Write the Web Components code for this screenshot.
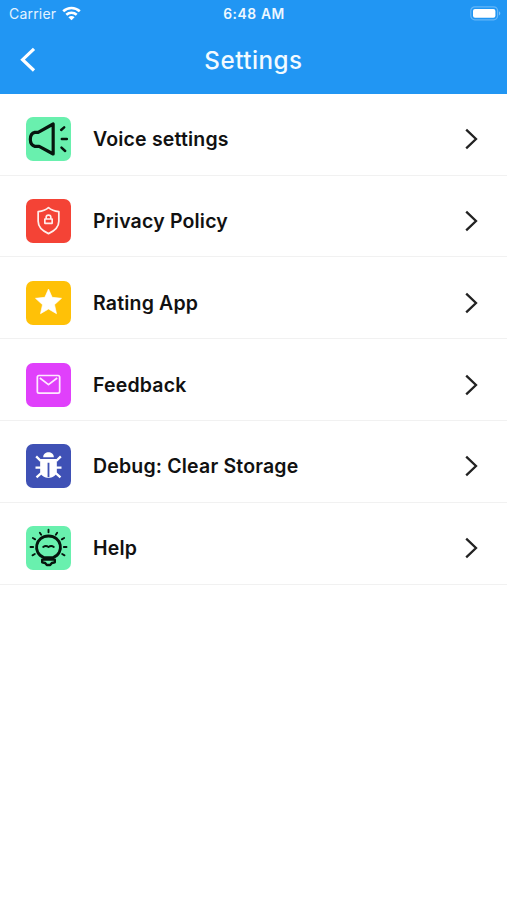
<!DOCTYPE html>
<html lang="en">
<head>
<meta charset="utf-8">
<title>Settings</title>
<style>
html,body{margin:0;height:100%;background:#fff}
body{font-family:Inter,"Liberation Sans",sans-serif;overflow:hidden}
</style>
</head>
<body>
<settings-screen></settings-screen>
<script>
const define = (name, html) => customElements.define(name, class extends HTMLElement {
  constructor() {
    super();
    this.attachShadow({ mode: 'open' }).innerHTML = html;
  }
});

define('status-bar', `
<style>
:host{display:grid;grid-template-columns:1fr auto 1fr;align-items:center;height:27px;padding:0 6px 0 9px;color:#fff;font-size:14px}
.left{display:flex;align-items:center;gap:5.3px;color:#e4f3ff;letter-spacing:.2px}
.left svg{margin-top:-1px}
.time{font-weight:600;font-size:13.8px;letter-spacing:.6px;color:#eef8ff;transform:translateX(-1px)}
.right{display:flex;justify-content:flex-end}
svg{display:block}
</style>
<div class="left"><span>Carrier</span>
<svg width="19" height="15" viewBox="0 0 19 15" fill="none" stroke="#fff" stroke-width="2.6"><path d="M1.2 5.3C6 .9 13 .9 17.8 5.3M4.3 8.8c3-2.7 7.4-2.7 10.4 0"/><path d="M9.5 14.2 6.4 11.2c1.7-1.5 4.5-1.5 6.2 0z" fill="#fff" stroke="none"/></svg></div>
<span class="time">6:48 AM</span>
<div class="right"><svg width="31" height="15" viewBox="0 0 31 15"><rect x=".8" y=".8" width="26.8" height="13" rx="4" fill="none" stroke="#64b6f8" stroke-width="1.2"/><rect x="3" y="3" width="22.4" height="8.8" rx="2" fill="#fff"/><path d="M29 5.2c1.8.8 1.8 3.4 0 4.2z" fill="#78c1fa"/></svg></div>`);

define('nav-bar', `
<style>
:host{display:grid;grid-template-columns:1fr auto 1fr;align-items:center;height:66.7px;color:#f2faff}
svg{display:block;margin-left:19px}
h1{margin:1px 0 0;font-size:24.2px;font-weight:500;letter-spacing:.5px;line-height:30px}
</style>
<svg width="18" height="26" viewBox="0 0 18 26" fill="none" stroke="#fff" stroke-width="3.2"><path d="M15 1.9 3.6 12.7 15 23.5"/></svg>
<h1><slot></slot></h1>`);

const ICONS = {
  voice: ['#69f0ae', `<g fill="none" stroke="#06150d" stroke-width="9.5" stroke-linejoin="round" stroke-linecap="round"><path d="M100 42V132L58 109H45C27 105 27 71 45 67H55Z"/><path d="M124 60l9-8M126 87h15M125 113l11 10" stroke-width="7.5"/></g>`],
  privacy: ['#f44336', `<g fill="none" stroke="#ffeeeb" stroke-width="5.2" stroke-linejoin="round"><path d="M86 47C76 56 66 58 55 59V88C55 105 70 118 86 125C102 118 117 105 117 88V59C106 58 96 56 86 47Z"/><path d="M75 81h22v13H75zM79 80V76c0-9 14-9 14 0v4" stroke-width="5"/></g>`],
  rating: ['#ffc107', `<path d="M86 45 97 70 125 73 104 92 110 119 86 105 62 119 68 92 47 73 75 70Z" fill="#fff" stroke="#fff" stroke-width="2" stroke-linejoin="round"/>`],
  feedback: ['#e040fb', `<g fill="none" stroke="#ffe8ff" stroke-width="5.2" stroke-linejoin="round"><rect x="52.5" y="58.5" width="67" height="53" rx="5"/><path d="M60 66 86 86 112 66"/></g>`],
  debug: ['#3f51b5', `<g fill="#fff"><path d="M70 61C70 41 102 41 102 61Z"/><path d="M61 66H111V104C107 128 65 128 61 104Z"/></g><path d="M86 77v43" stroke="#3f51b5" stroke-width="5.5"/><path d="M49 58 63 72M123 58 109 72M47 92H66M106 92H125M66 107 50 121M106 107l16 14" fill="none" stroke="#fff" stroke-width="7"/>`],
  help: ['#69f0ae', `<g fill="none" stroke="#06150d" stroke-width="8.5" stroke-linecap="round" stroke-linejoin="round"><path d="M72 116C36 101 47 51 86 51S136 101 100 116Z"/><path d="M67 122h38v8l-9 2-5 6H81l-5-6-9-2z" stroke-width="7"/><path d="M70 84q8-6 16 0 8-6 16 0" stroke-width="5.5"/><path d="M86 32v8M60 41l4 6M112 41l-4 6M39 57l7 4M133 57l-7 4M32 84h8M132 84h8M38 109l7-4M134 109l-7-4" stroke-width="5.6"/></g>`]
};

customElements.define('icon-tile', class extends HTMLElement {
  connectedCallback() {
    const [color, art] = ICONS[this.getAttribute('name')];
    this.attachShadow({ mode: 'open' }).innerHTML = `
<style>
:host{display:block;width:44.5px;height:44px;border-radius:7px;overflow:hidden;background:${color}}
svg{display:block}
</style>
<svg width="45" height="44" viewBox="18.5 21 135 132">${art}</svg>`;
  }
});

define('settings-row', `
<style>
:host{display:flex;align-items:center;box-sizing:border-box;height:81.85px;padding:10px 28px 0 26.4px;border-bottom:1px solid #f1f1f1;color:#111}
.label{flex:1;margin-left:22.1px;font-size:19.5px;font-weight:600;line-height:26px;letter-spacing:.18px}
.chevron{display:block}
</style>
<slot name="icon"></slot>
<span class="label"><slot></slot></span>
<svg class="chevron" width="15" height="22" viewBox="0 0 15 22" fill="none" stroke="#222" stroke-width="2.3"><path d="M2.2 1.6 12 11 2.2 20.4"/></svg>`);

define('settings-screen', `
<style>
:host{display:flex;flex-direction:column;height:900px;width:507px;background:#fff}
header{background:#2196f3}
main{display:flex;flex-direction:column}
</style>
<header><status-bar></status-bar><nav-bar>Settings</nav-bar></header>
<main>
<settings-row><icon-tile slot="icon" name="voice"></icon-tile>Voice settings</settings-row>
<settings-row><icon-tile slot="icon" name="privacy"></icon-tile>Privacy Policy</settings-row>
<settings-row><icon-tile slot="icon" name="rating"></icon-tile>Rating App</settings-row>
<settings-row><icon-tile slot="icon" name="feedback"></icon-tile>Feedback</settings-row>
<settings-row><icon-tile slot="icon" name="debug"></icon-tile>Debug: Clear Storage</settings-row>
<settings-row><icon-tile slot="icon" name="help"></icon-tile>Help</settings-row>
</main>`);
</script>
</body>
</html>
